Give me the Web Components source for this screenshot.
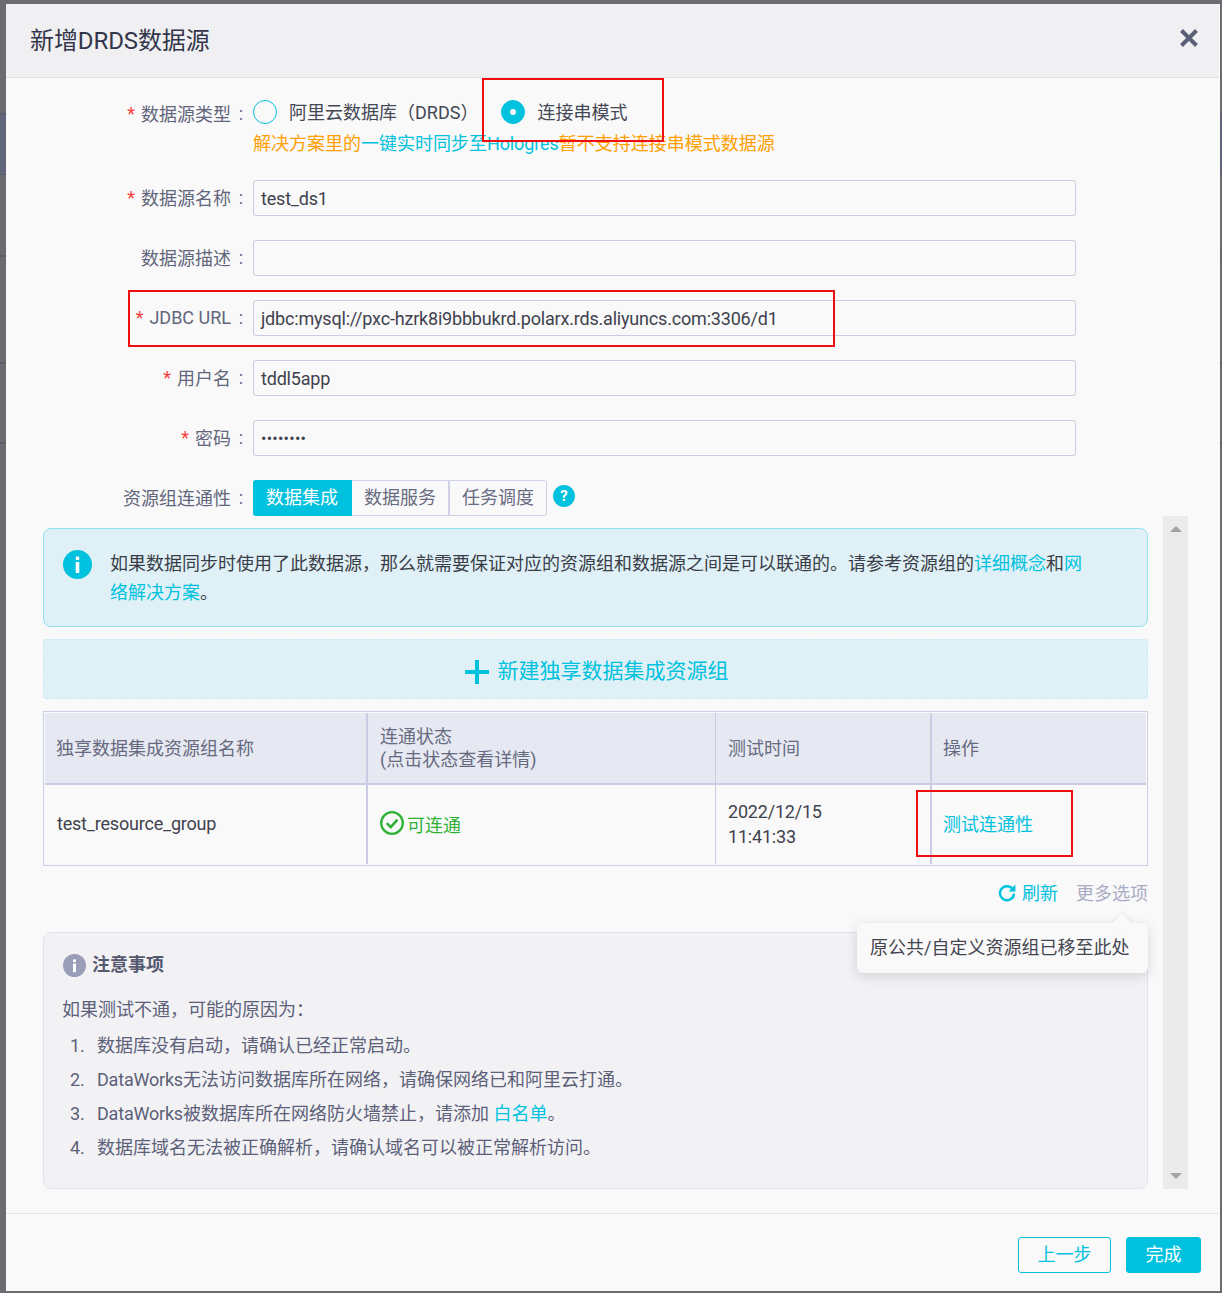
<!DOCTYPE html>
<html lang="zh-CN">
<head>
<meta charset="utf-8">
<title>新增DRDS数据源</title>
<style>
    html, body {
        margin: 0;
        height: 100%;
    }
    body {
        /* page behind the mask shows on the left edge only */
        background: linear-gradient(to bottom,
            #6b6c70 0, #6b6c70 113px,
            #5b5d6e 113px, #5b5d6e 115px,
            #62667a 115px, #62667a 174px,
            #5b5d6e 174px, #5b5d6e 175px,
            #6b6c70 175px, #6b6c70 255px,
            #5b5d6e 255px, #5b5d6e 257px,
            #6b6c70 257px, #6b6c70 362px,
            #5b5d6e 362px, #5b5d6e 364px,
            #6b6c70 364px, #6b6c70 442px,
            #5b5d6e 442px, #5b5d6e 444px,
            #6b6c70 444px) no-repeat;
        background-color: #6b6c70;
        font-family: Roboto, "Noto Sans CJK SC", sans-serif;
        font-size: 18px;
        color: #333;
        overflow: hidden;
    }
</style>
</head>
<body>

<ds-dialog heading="新增DRDS数据源">
    <ds-field label="数据源类型" required>
        <ds-radio-group>
            <ds-radio>阿里云数据库（DRDS）</ds-radio>
            <ds-radio checked>连接串模式</ds-radio>
        </ds-radio-group>
    </ds-field>
    <ds-field label="数据源名称" required><ds-input>test_ds1</ds-input></ds-field>
    <ds-field label="数据源描述"><ds-input></ds-input></ds-field>
    <ds-field label="JDBC URL" required><ds-input>jdbc:mysql://pxc-hzrk8i9bbbukrd.polarx.rds.aliyuncs.com:3306/d1</ds-input></ds-field>
    <ds-field label="用户名" required><ds-input>tddl5app</ds-input></ds-field>
    <ds-field label="密码" required><ds-input secret>••••••••</ds-input></ds-field>
    <ds-field label="资源组连通性" last><ds-segment></ds-segment></ds-field>

    <ds-scroll-area>
        <ds-alert></ds-alert>
        <ds-add-box>新建独享数据集成资源组</ds-add-box>
        <ds-resource-table></ds-resource-table>
        <ds-table-tools></ds-table-tools>
        <ds-notes heading="注意事项" intro="如果测试不通，可能的原因为：">
            <ds-note-item num="1.">数据库没有启动，请确认已经正常启动。</ds-note-item>
            <ds-note-item num="2."><span style="letter-spacing:-.2px">DataWorks</span>无法访问数据库所在网络，请确保网络已和阿里云打通。</ds-note-item>
            <ds-note-item num="3."><span style="letter-spacing:-.2px">DataWorks</span>被数据库所在网络防火墙禁止，请添加 <a href="#" style="color:#00c1de;text-decoration:none">白名单</a>。</ds-note-item>
            <ds-note-item num="4.">数据库域名无法被正确解析，请确认域名可以被正常解析访问。</ds-note-item>
        </ds-notes>
    </ds-scroll-area>

    <ds-button slot="footer">上一步</ds-button>
    <ds-button slot="footer" primary>完成</ds-button>

    <!-- red annotations drawn over the screenshot -->
    <ds-mark slot="marks" style="left:476px;top:74px;width:182px;height:64px"></ds-mark>
    <ds-mark slot="marks" style="left:122px;top:286px;width:707px;height:57px"></ds-mark>
    <ds-mark slot="marks" style="left:910px;top:786px;width:157px;height:67px"></ds-mark>
</ds-dialog>

<script>
// dialog frame: header, body, footer
class DsDialog extends HTMLElement {
    constructor() {
        super();
        this.attachShadow({ mode: 'open' });
    }

    connectedCallback() {
        const heading = this.getAttribute('heading') || '';
        this.shadowRoot.innerHTML = `
            <style>
                :host {
                    display: flex;
                    flex-direction: column;
                    position: relative;
                    box-sizing: border-box;
                    width: 1214px;
                    height: 1287px;
                    margin: 4px 0 0 6px;
                    background: #f9f9f9;
                }
                header {
                    display: flex;
                    align-items: center;
                    justify-content: space-between;
                    box-sizing: border-box;
                    height: 74px;
                    padding: 0 20px 1px 24px;
                    background: #f0f0f2;
                    border-bottom: 1px solid #e3e3e6;
                    margin-right: 1px;
                }
                h1 {
                    margin: -3px 0 0;
                    font-size: 24px;
                    font-weight: 400;
                    letter-spacing: -.1px;
                    color: #33364a;
                }
                svg {
                    display: block;
                    margin-top: -5px;
                }
                main {
                    flex: none;
                    padding-top: 18px;
                }
                footer {
                    display: flex;
                    justify-content: flex-end;
                    gap: 15px;
                    margin-top: 24px;
                    margin-right: 1px;
                    padding: 23px 18px 0 0;
                    border-top: 1px solid #e6e6e8;
                }
            </style>
            <header>
                <h1>${heading}</h1>
                <svg width="20" height="20" viewBox="0 0 20 20">
                    <path d="M2.5 2.5L17.5 17.5M17.5 2.5L2.5 17.5" stroke="#5b5f76" stroke-width="4" fill="none"/>
                </svg>
            </header>
            <main><slot></slot></main>
            <footer><slot name="footer"></slot></footer>
            <slot name="marks"></slot>
        `;
    }
}

// one form row with a right-aligned label
class DsField extends HTMLElement {
    constructor() {
        super();
        this.attachShadow({ mode: 'open' });
    }

    connectedCallback() {
        const label = this.getAttribute('label') || '';
        const star = this.hasAttribute('required') ? '<i>*</i>' : '';
        this.shadowRoot.innerHTML = `
            <style>
                :host {
                    display: grid;
                    grid-template-columns: 247px 823px;
                    margin-bottom: 24px;
                }
                :host([last]) {
                    margin-bottom: 0;
                }
                label {
                    display: flex;
                    justify-content: flex-end;
                    align-items: center;
                    height: 34px;
                    color: #62667c;
                    white-space: nowrap;
                }
                i {
                    font-style: normal;
                    color: #f5413d;
                    margin-right: 6px;
                }
                b {
                    font-weight: 400;
                    width: 20px;
                    margin-right: 2px;
                    text-align: center;
                }
            </style>
            <label>${star}${label}<b>:</b></label>
            <div><slot></slot></div>
        `;
    }
}

class DsInput extends HTMLElement {
    constructor() {
        super();
        this.attachShadow({ mode: 'open' });
    }

    connectedCallback() {
        this.shadowRoot.innerHTML = `
            <style>
                :host {
                    display: flex;
                    align-items: center;
                    box-sizing: border-box;
                    height: 36px;
                    padding: 0 7px;
                    border: 1px solid #c9cce0;
                    border-radius: 3px;
                    color: #3f424e;
                    letter-spacing: -.19px;
                    white-space: nowrap;
                }
                :host([secret]) {
                    font-size: 16px;
                    letter-spacing: .25px;
                }
            </style>
            <slot></slot>
        `;
    }
}

class DsRadioGroup extends HTMLElement {
    constructor() {
        super();
        this.attachShadow({ mode: 'open' });
    }

    connectedCallback() {
        this.shadowRoot.innerHTML = `
            <style>
                :host {
                    display: block;
                    padding-top: 4px;
                }
                .options {
                    display: flex;
                    gap: 23px;
                }
                .hint {
                    margin-top: 7px;
                    line-height: 25px;
                    color: #ffa003;
                    white-space: nowrap;
                }
                .hint span {
                    color: #00c1de;
                }
                .hint em {
                    font-style: normal;
                    letter-spacing: -.12px;
                }
            </style>
            <div class="options"><slot></slot></div>
            <div class="hint">解决方案里的<span>一键实时同步至<em>Hologres</em></span>暂不支持连接串模式数据源</div>
        `;
    }
}

class DsRadio extends HTMLElement {
    constructor() {
        super();
        this.attachShadow({ mode: 'open' });
    }

    connectedCallback() {
        this.shadowRoot.innerHTML = `
            <style>
                :host {
                    display: flex;
                    align-items: center;
                    gap: 12px;
                    height: 24px;
                    color: #444754;
                    white-space: nowrap;
                }
                .dot {
                    display: flex;
                    align-items: center;
                    justify-content: center;
                    box-sizing: border-box;
                    width: 24px;
                    height: 24px;
                    border: 1px solid #00c1de;
                    border-radius: 50%;
                }
                :host([checked]) .dot {
                    background: #00c1de;
                }
                :host([checked]) .dot::after {
                    content: "";
                    width: 6px;
                    height: 6px;
                    border-radius: 50%;
                    background: #fff;
                }
                .text {
                    margin-top: -3px;
                }
            </style>
            <span class="dot"></span>
            <span class="text"><slot></slot></span>
        `;
    }
}

// data integration / data service / scheduling switch + help bubble
class DsSegment extends HTMLElement {
    constructor() {
        super();
        this.attachShadow({ mode: 'open' });
    }

    connectedCallback() {
        this.shadowRoot.innerHTML = `
            <style>
                :host {
                    display: flex;
                    align-items: flex-start;
                }
                .tabs {
                    display: grid;
                    grid-template-columns: 99px 97px 98px;
                    height: 36px;
                    line-height: 34px;
                    text-align: center;
                    color: #686c82;
                }
                span {
                    box-sizing: border-box;
                    border: 1px solid #cfd1e4;
                    border-left: 0;
                }
                span:first-child {
                    background: #00c1de;
                    border-color: #00c1de;
                    color: #fff;
                    border-radius: 3px 0 0 3px;
                }
                span:last-child {
                    border-left: 1px solid #cfd1e4;
                    border-radius: 0 3px 3px 0;
                }
                .help {
                    display: flex;
                    align-items: center;
                    justify-content: center;
                    width: 22px;
                    height: 22px;
                    margin: 5px 0 0 6px;
                    border-radius: 50%;
                    background: #00c1de;
                    color: #fff;
                    font: 700 15px/22px Roboto, sans-serif;
                }
            </style>
            <div class="tabs"><span>数据集成</span><span>数据服务</span><span>任务调度</span></div>
            <div class="help">?</div>
        `;
    }
}

// lower part of the form with its own scrollbar
class DsScrollArea extends HTMLElement {
    constructor() {
        super();
        this.attachShadow({ mode: 'open' });
    }

    connectedCallback() {
        this.shadowRoot.innerHTML = `
            <style>
                :host {
                    display: grid;
                    grid-template-columns: 1105px 25px;
                    column-gap: 15px;
                    margin-left: 37px;
                }
                .content {
                    padding-top: 12px;
                }
                .bar {
                    display: flex;
                    flex-direction: column;
                    justify-content: space-between;
                    align-items: center;
                    padding: 10px 0;
                    background: #ebebeb;
                }
                .bar i {
                    width: 0;
                    height: 0;
                    border-left: 6px solid transparent;
                    border-right: 6px solid transparent;
                }
                .up { border-bottom: 6px solid #a3a3a3; }
                .down { border-top: 6px solid #a3a3a3; }
            </style>
            <div class="content"><slot></slot></div>
            <div class="bar"><i class="up"></i><i class="down"></i></div>
        `;
    }
}

class DsAlert extends HTMLElement {
    constructor() {
        super();
        this.attachShadow({ mode: 'open' });
    }

    connectedCallback() {
        this.shadowRoot.innerHTML = `
            <style>
                :host {
                    display: flex;
                    box-sizing: border-box;
                    height: 99px;
                    padding: 20px 0 0 19px;
                    background: #dff1f6;
                    border: 1px solid #8fe2ee;
                    border-radius: 8px;
                }
                svg {
                    flex: none;
                    margin: 1px 18px 0 0;
                }
                p {
                    width: 982px;
                    margin: 0;
                    line-height: 29px;
                    color: #3a3d48;
                }
                a {
                    color: #00c1de;
                    text-decoration: none;
                }
            </style>
            <svg width="29" height="29" viewBox="0 0 29 29">
                <circle cx="14.5" cy="14.5" r="14.5" fill="#00c1de"/>
                <rect x="12.7" y="6.5" width="3.6" height="3.6" rx="1.2" fill="#fff"/>
                <rect x="12.7" y="12" width="3.6" height="11" fill="#fff"/>
            </svg>
            <p>如果数据同步时使用了此数据源，那么就需要保证对应的资源组和数据源之间是可以联通的。请参考资源组的<a href="#">详细概念</a>和<a href="#">网络解决方案</a>。</p>
        `;
    }
}

class DsAddBox extends HTMLElement {
    constructor() {
        super();
        this.attachShadow({ mode: 'open' });
    }

    connectedCallback() {
        this.shadowRoot.innerHTML = `
            <style>
                :host {
                    display: flex;
                    align-items: center;
                    justify-content: center;
                    gap: 9px;
                    box-sizing: border-box;
                    height: 60px;
                    margin: 12px 0;
                    padding-left: 2px;
                    background: #dff1f6;
                    border: 1px dashed #c4edf3;
                    border-radius: 3px;
                    font-size: 21px;
                    color: #00c1de;
                }
                svg {
                    margin-top: 6px;
                }
            </style>
            <svg width="24" height="24" viewBox="0 0 24 24">
                <path d="M12 0V24M0 12H24" stroke="#00c1de" stroke-width="4" fill="none"/>
            </svg>
            <span><slot></slot></span>
        `;
    }
}

class DsResourceTable extends HTMLElement {
    constructor() {
        super();
        this.attachShadow({ mode: 'open' });
    }

    connectedCallback() {
        this.shadowRoot.innerHTML = `
            <style>
                :host {
                    display: grid;
                    grid-template-columns: 321px 349px 215px 216px;
                    grid-template-rows: 72px 79px;
                    box-sizing: border-box;
                    height: 155px;
                    padding: 1px;
                    border: 1px solid #cbcee4;
                }
                div {
                    display: flex;
                    align-items: center;
                    box-sizing: border-box;
                    padding-left: 12px;
                    border-left: 2px solid #c9cce2;
                    color: #3f424e;
                }
                div.first {
                    border-left: 0;
                    padding-left: 11px;
                }
                div.thin {
                    border-left-width: 1px;
                }
                div.tight {
                    padding-left: 11px;
                }
                .head {
                    background: #e6e9f2;
                    border-bottom: 2px solid #c9cce2;
                    color: #666a80;
                    line-height: 23px;
                }
                .name {
                    margin-top: -2px;
                    letter-spacing: -.2px;
                }
                .time {
                    line-height: 25px;
                    margin-top: -1px;
                    letter-spacing: -.2px;
                }
                a {
                    color: #00c1de;
                    text-decoration: none;
                    margin-top: -4px;
                }
                .ok {
                    color: #2eb135;
                    margin: -2px 0 0 3px;
                }
                svg {
                    display: block;
                    margin-top: -3px;
                }
            </style>
            <div class="head first">独享数据集成资源组名称</div>
            <div class="head">连通状态<br>(点击状态查看详情)</div>
            <div class="head thin">测试时间</div>
            <div class="head tight">操作</div>
            <div class="first"><span class="name" style="padding-left:1px">test_resource_group</span></div>
            <div>
                <svg width="24" height="24" viewBox="0 0 24 24">
                    <circle cx="12" cy="12" r="10.8" stroke="#2eb135" stroke-width="2.3" fill="none"/>
                    <path d="M6.8 12.2L10.8 16.2L17.4 8.6" stroke="#2eb135" stroke-width="2.6" fill="none"/>
                </svg>
                <span class="ok">可连通</span>
            </div>
            <div class="thin"><span class="time">2022/12/15<br>11:41:33</span></div>
            <div class="tight"><a href="#">测试连通性</a></div>
        `;
    }
}

// refresh + more options line, the tooltip hangs below it
class DsTableTools extends HTMLElement {
    constructor() {
        super();
        this.attachShadow({ mode: 'open' });
    }

    connectedCallback() {
        this.shadowRoot.innerHTML = `
            <style>
                :host {
                    display: flex;
                    justify-content: flex-end;
                    align-items: center;
                    position: relative;
                    height: 24px;
                    padding: 14px 0 28px;
                    white-space: nowrap;
                }
                .refresh {
                    display: flex;
                    align-items: center;
                    gap: 6px;
                    margin-right: 18px;
                    color: #00c1de;
                }
                .refresh svg {
                    margin-top: 1px;
                }
                .more {
                    color: #a9acc4;
                }
                .tip {
                    position: absolute;
                    right: 0;
                    top: 57px;
                    z-index: 2;
                    box-sizing: border-box;
                    width: 291px;
                    height: 50px;
                    padding: 0 0 0 13px;
                    background: #f9f9fa;
                    border-radius: 6px;
                    box-shadow: 0 3px 12px rgba(60, 60, 80, .18);
                    line-height: 49px;
                    color: #44464f;
                }
                .tip::before {
                    content: "";
                    position: absolute;
                    right: 19px;
                    top: -7px;
                    width: 14px;
                    height: 14px;
                    background: #f9f9fa;
                    transform: rotate(45deg);
                    box-shadow: -1px -1px 2px rgba(60, 60, 80, .08);
                }
                .tip span {
                    position: relative;
                }
            </style>
            <div class="refresh">
                <svg width="18" height="18" viewBox="0 0 18 18">
                    <path d="M14.6 5A7 7 0 1 0 16 9.6" stroke="#00c1de" stroke-width="2.4" fill="none"/>
                    <path d="M17.4 0.6V7.4H10.6Z" fill="#00c1de"/>
                </svg>
                <span>刷新</span>
            </div>
            <div class="more">更多选项</div>
            <div class="tip"><span>原公共/自定义资源组已移至此处</span></div>
        `;
    }
}

class DsNotes extends HTMLElement {
    constructor() {
        super();
        this.attachShadow({ mode: 'open' });
    }

    connectedCallback() {
        const heading = this.getAttribute('heading') || '';
        const intro = this.getAttribute('intro') || '';
        this.shadowRoot.innerHTML = `
            <style>
                :host {
                    display: block;
                    box-sizing: border-box;
                    height: 257px;
                    padding: 20px 18px 0;
                    background: #f2f2f5;
                    border: 1px solid #e2e2ee;
                    border-radius: 8px;
                    color: #5c6078;
                }
                h3 {
                    display: flex;
                    align-items: center;
                    gap: 6px;
                    height: 24px;
                    margin: 0 0 16px 1px;
                    font-size: 18px;
                    font-weight: 700;
                    line-height: 22px;
                    color: #555970;
                }
                h3 span {
                    margin-top: -1px;
                }
                p {
                    margin: 0 0 2px;
                    line-height: 34px;
                }
            </style>
            <h3>
                <svg width="23" height="23" viewBox="0 0 23 23">
                    <circle cx="11.5" cy="11.5" r="11.5" fill="#9a9db8"/>
                    <rect x="10" y="5.2" width="3" height="3" rx="1" fill="#fff"/>
                    <rect x="10" y="9.6" width="3" height="8.6" fill="#fff"/>
                </svg>
                <span>${heading}</span>
            </h3>
            <p>${intro}</p>
            <slot></slot>
        `;
    }
}

class DsNoteItem extends HTMLElement {
    constructor() {
        super();
        this.attachShadow({ mode: 'open' });
    }

    connectedCallback() {
        this.shadowRoot.innerHTML = `
            <style>
                :host {
                    display: flex;
                    line-height: 34px;
                    padding-left: 8px;
                    white-space: nowrap;
                }
                b {
                    flex: none;
                    width: 27px;
                    font-weight: 400;
                }
            </style>
            <b>${this.getAttribute('num') || ''}</b>
            <span><slot></slot></span>
        `;
    }
}

class DsButton extends HTMLElement {
    constructor() {
        super();
        this.attachShadow({ mode: 'open' });
    }

    connectedCallback() {
        this.shadowRoot.innerHTML = `
            <style>
                :host {
                    display: flex;
                    align-items: center;
                    justify-content: center;
                    box-sizing: border-box;
                    width: 93px;
                    height: 36px;
                    padding-bottom: 5px;
                    border: 1px solid #00c1de;
                    border-radius: 3px;
                    color: #00c1de;
                }
                :host([primary]) {
                    width: 75px;
                    background: #00c1de;
                    color: #fff;
                }
            </style>
            <slot></slot>
        `;
    }
}

// red rectangle drawn on top of the dialog
class DsMark extends HTMLElement {
    constructor() {
        super();
        this.attachShadow({ mode: 'open' });
    }

    connectedCallback() {
        this.shadowRoot.innerHTML = `
            <style>
                :host {
                    position: absolute;
                    box-sizing: border-box;
                    border: 2px solid #f00e0e;
                    z-index: 3;
                    pointer-events: none;
                }
            </style>
        `;
    }
}

customElements.define('ds-dialog', DsDialog);
customElements.define('ds-field', DsField);
customElements.define('ds-input', DsInput);
customElements.define('ds-radio-group', DsRadioGroup);
customElements.define('ds-radio', DsRadio);
customElements.define('ds-segment', DsSegment);
customElements.define('ds-scroll-area', DsScrollArea);
customElements.define('ds-alert', DsAlert);
customElements.define('ds-add-box', DsAddBox);
customElements.define('ds-resource-table', DsResourceTable);
customElements.define('ds-table-tools', DsTableTools);
customElements.define('ds-notes', DsNotes);
customElements.define('ds-note-item', DsNoteItem);
customElements.define('ds-button', DsButton);
customElements.define('ds-mark', DsMark);
</script>
</body>
</html>
